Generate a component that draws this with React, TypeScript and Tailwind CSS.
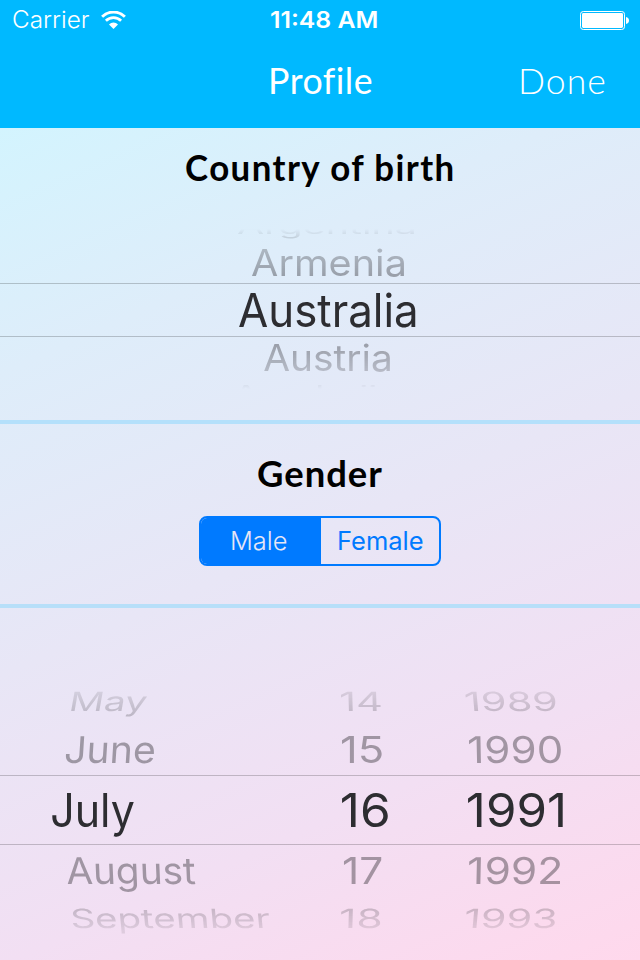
import { useLayoutEffect, useRef, useState } from 'react';

const SANS = "font-['Inter','Liberation_Sans',sans-serif]";
const TITLE = "font-['Lato','Open_Sans',sans-serif] [font-variant-ligatures:none]";

/** A label that condenses or widens its glyphs so the ink fills the box width. */
function Fit({ text, className }: { text: string; className: string }) {
  const box = useRef<HTMLDivElement>(null);
  const [fit, setFit] = useState({ scale: 1, shift: 0 });

  useLayoutEffect(() => {
    const el = box.current;
    const ctx = document.createElement('canvas').getContext('2d');
    if (!el || !ctx) return;
    const css = getComputedStyle(el);
    const spacing = parseFloat(css.letterSpacing) || 0;
    ctx.font = `${css.fontWeight} ${css.fontSize} ${css.fontFamily}`;
    const m = ctx.measureText(text);
    const ink =
      m.actualBoundingBoxLeft + m.actualBoundingBoxRight + spacing * (text.length - 1);
    const scale = el.offsetWidth / ink;
    setFit({ scale, shift: m.actualBoundingBoxLeft * scale });
  }, [text]);

  return (
    <div ref={box} className={`shrink-0 whitespace-nowrap ${className}`}>
      <span
        className="inline-block origin-left"
        style={{ transform: `translateX(${fit.shift}px) scaleX(${fit.scale})` }}
      >
        {text}
      </span>
    </div>
  );
}

function Wifi() {
  return (
    <svg className="ml-3 h-[18px] w-[25px]" viewBox="0 0 25 18" fill="none">
      <path d="M1.1 5.700a16.300 16.300 0 0 1 22.800 0" stroke="#fff" strokeWidth="2.900" />
      <path d="M4.900 9.800a10.800 10.800 0 0 1 15.200 0" stroke="#fff" strokeWidth="2.700" />
      <path d="M8 13.400a6.400 6.400 0 0 1 9 0L12.500 17.900z" fill="#fff" />
    </svg>
  );
}

function Battery() {
  return (
    <svg className="h-[19px] w-[49px]" viewBox="0 0 49 19" fill="none">
      <rect x="0.5" y="0.5" width="44" height="18" rx="2.8" stroke="#fff" />
      <rect x="2" y="2" width="41" height="15" rx="1.4" fill="#fff" />
      <path d="M46 6c2 .3 3 1.600 3 3.500s-1 3.200-3 3.500z" fill="#fff" />
    </svg>
  );
}

const outer = 'text-[45px] text-[#28262b]/25';
const near = 'text-[45px] text-[#28262b]/40';
const current = 'text-[46px] text-[#2d2d31]';

const dateRows = [
  {
    row: `h-[49px] leading-[49px] ${outer}`,
    cells: [
      ['May', 'ml-[72px] w-[75px] mr-[194px] scale-y-[0.59] -skew-x-[6deg]'],
      ['14', 'w-[40px] mr-[85px] scale-y-[0.59] skew-x-[1deg]'],
      ['1989', 'w-[90px] scale-y-[0.59] skew-x-[3deg]'],
    ],
  },
  {
    row: `mb-0.5 h-[47px] leading-[47px] ${near}`,
    cells: [
      ['June', 'ml-[66px] w-[89px] mr-[187px] scale-y-[0.82] -skew-x-[3deg]'],
      ['15', 'w-[40px] mr-[87px] scale-y-[0.82]'],
      ['1990', 'w-[92px] scale-y-[0.82] skew-x-[1deg]'],
    ],
  },
  {
    row: `h-[70px] border-y border-black/20 leading-[68px] ${current}`,
    cells: [
      ['July', 'ml-[52px] w-[82px] mr-[208px]'],
      ['16', 'w-[46px] mr-[80px]'],
      ['1991', 'w-[95px]'],
    ],
  },
  {
    row: `mt-0.5 h-[47px] leading-[47px] ${near}`,
    cells: [
      ['August', 'ml-[67px] w-[128px] mr-[149px] scale-y-[0.82] skew-x-[2deg]'],
      ['17', 'w-[38px] mr-[87px] scale-y-[0.82]'],
      ['1992', 'w-[92px] scale-y-[0.82] -skew-x-[1deg]'],
    ],
  },
  {
    row: `h-[49px] leading-[49px] ${outer}`,
    cells: [
      ['September', 'ml-[72px] w-[197px] mr-[72px] scale-y-[0.59] skew-x-[3deg]'],
      ['18', 'w-[40px] mr-[85px] scale-y-[0.59] -skew-x-[1deg]'],
      ['1993', 'w-[90px] scale-y-[0.59] -skew-x-[3deg]'],
    ],
  },
];

export default function App() {
  return (
    <div className={`flex h-[960px] w-[640px] flex-col overflow-hidden bg-[#00b9ff] ${SANS}`}>
      <header className="h-32 shrink-0 text-white">
        <div className="flex h-10 items-center pl-[13px] pr-[11px]">
          <Fit text="Carrier" className="w-[76px] text-[23.5px] font-light leading-[40px]" />
          <Wifi />
          <Fit
            text="11:48 AM"
            className="ml-[145px] w-[106px] text-[23px] font-semibold leading-[42px]"
          />
          <div className="ml-auto">
            <Battery />
          </div>
        </div>
        <div className={`flex h-[80px] items-center pl-[271px] text-[36px] leading-[81px] ${TITLE}`}>
          <Fit text="Profile" className="w-[100px] font-normal tracking-[0.5px]" />
          <Fit text="Done" className="ml-[150px] w-[84px] font-light tracking-[1px]" />
        </div>
      </header>

      <main className="flex flex-1 flex-col bg-[linear-gradient(156deg,#d3f4fe_0%,#deedfa_22%,#e8e6f6_49%,#f2dff3_75%,#ffd8ec_100%)]">
        <section className="flex h-[296px] flex-col items-center border-b-4 border-[#b4e0fb]">
          <Fit
            text="Country of birth"
            className={`w-[268px] text-[37px] font-bold leading-[77px] tracking-[1.5px] text-black ${TITLE}`}
          />
          <div className="mt-1.5 flex w-full flex-col [mask-image:linear-gradient(to_bottom,transparent_18px,rgba(0,0,0,0.6)_33px,black_68px,black_130px,rgba(0,0,0,0.6)_160px,transparent_178px)]">
            <div className="h-8 pl-[238px] text-[45px] leading-8 text-[#28262b]/40">
              <Fit text="Argentina" className="w-[176px] scale-y-[0.44]" />
            </div>
            <div className="h-10 pl-[252px] text-[45px] leading-10 text-[#28262b]/40">
              <Fit text="Armenia" className="w-[152px] scale-y-[0.82]" />
            </div>
            <div className="h-[54px] border-y border-black/20 pl-[239px] text-[46px] leading-[53px] text-[#2d2d31]">
              <Fit text="Australia" className="w-[177px]" />
            </div>
            <div className="h-[41px] pl-[264px] text-[45px] leading-[41px] text-[#28262b]/40">
              <Fit text="Austria" className="w-[126px] scale-y-[0.82]" />
            </div>
            <div className="h-[30px] pl-[234px] text-[45px] leading-[30px] text-[#28262b]/40">
              <Fit text="Azerbaijan" className="w-[184px] scale-y-[0.44]" />
            </div>
          </div>
        </section>

        <section className="flex h-[184px] flex-col items-center border-b-4 border-[#b7dff9]">
          <Fit
            text="Gender"
            className={`mt-3.5 w-[124px] text-[37px] font-bold leading-[70px] tracking-[1px] text-black ${TITLE}`}
          />
          <div className="mt-2 flex h-[50px] w-[242px] overflow-hidden rounded-lg border-2 border-[#007aff] text-[25px] leading-[47px]">
            <div className="w-[120px] bg-[#007aff] pl-[31px] text-[#e7e6f6]">
              <Fit text="Male" className="w-[55px] font-light" />
            </div>
            <div className="pl-[18px] text-[#007aff]">
              <Fit text="Female" className="w-[84px]" />
            </div>
          </div>
        </section>

        <section className="flex flex-col pt-[69px]">
          <div className="[mask-image:linear-gradient(to_bottom,rgba(0,0,0,0.4)_12px,black_42px,black_226px,rgba(0,0,0,0.4)_254px)]">
            {dateRows.map(({ row, cells }) => (
              <div key={cells[0][0]} className={`flex ${row}`}>
                {cells.map(([text, cell]) => (
                  <Fit key={text} text={text} className={cell} />
                ))}
              </div>
            ))}
          </div>
        </section>
      </main>
    </div>
  );
}
